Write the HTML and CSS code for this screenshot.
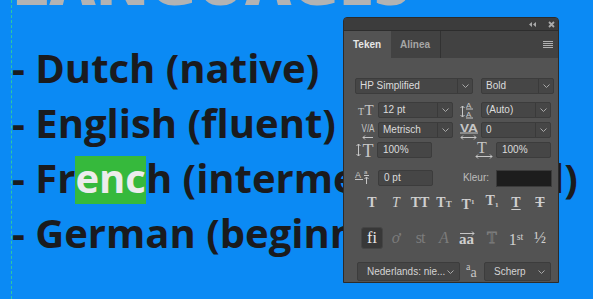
FILE: index.html
```html
<!DOCTYPE html>
<html>
<head>
<meta charset="utf-8">
<link rel="stylesheet" href="styles.css">
</head>
<body>
<div class="canvas">
  <div class="title">LANGUAGES</div>
  <ul class="langs">
    <li>- Dutch (native)</li>
    <li>- English (fluent)</li>
    <li>- Fr<span class="sel">enc</span>h (intermediate level)</li>
    <li>- German (beginner)</li>
  </ul>

  <div class="panel">
    <div class="titlebar">
      <svg class="collapse" width="7" height="5" viewBox="0 0 7 5"><path d="M3 0L0 2.5 3 5zM7 0L4 2.5 7 5z"/></svg>
      <svg class="close" width="7" height="7" viewBox="0 0 7 7"><path d="M1 1l5 5M6 1l-5 5"/></svg>
    </div>
    <div class="tabs">
      <div class="tab active">Teken</div>
      <div class="tab">Alinea</div>
      <svg class="menu" width="10" height="7" viewBox="0 0 10 7"><path d="M0 .5h10M0 2.5h10M0 4.5h10M0 6.5h10"/></svg>
    </div>
    <div class="body">
      <div class="row r1">
        <div class="dd w118"><span class="val">HP Simplified</span><span class="arr"><svg width="7" height="4" viewBox="0 0 7 4"><path d="M.5 .5L3.5 3.5 6.5 .5"/></svg></span></div>
        <div class="dd w73"><span class="val">Bold</span><span class="arr"><svg width="7" height="4" viewBox="0 0 7 4"><path d="M.5 .5L3.5 3.5 6.5 .5"/></svg></span></div>
      </div>

      <div class="row r2">
        <span class="ico c23"><svg width="23" height="16"><text x="3" y="12.5" class="serif" font-size="10">T</text><text x="9.5" y="12.5" class="serif" font-size="15">T</text></svg></span>
        <div class="dd w75"><span class="val">12 pt</span><span class="arr"><svg width="7" height="4" viewBox="0 0 7 4"><path d="M.5 .5L3.5 3.5 6.5 .5"/></svg></span></div>
        <span class="ico c28"><svg width="28" height="16"><path class="ln" d="M9.5 4v11M7.5 6l2-2 2 2M7.5 13l2 2 2-2"/><text x="13" y="5.5" class="sans" font-size="8">A</text><rect x="13" y="6.5" width="7" height="1"/><text x="13" y="14.5" class="sans" font-size="8">A</text><rect x="13" y="15.5" width="7" height="1"/></svg></span>
        <div class="dd w70"><span class="val">(Auto)</span><span class="arr"><svg width="7" height="4" viewBox="0 0 7 4"><path d="M.5 .5L3.5 3.5 6.5 .5"/></svg></span></div>
      </div>

      <div class="row r3">
        <span class="ico c23"><svg width="23" height="16"><text x="6.5" y="10" class="sans" font-size="11" textLength="13" lengthAdjust="spacingAndGlyphs">V/A</text><path class="ln" d="M8 15.5h10M10 13.5l-2 2 2 2"/></svg></span>
        <div class="dd w75"><span class="val">Metrisch</span><span class="arr"><svg width="7" height="4" viewBox="0 0 7 4"><path d="M.5 .5L3.5 3.5 6.5 .5"/></svg></span></div>
        <span class="ico c28"><svg width="28" height="16"><text x="7" y="10" class="sans bold" font-size="11" textLength="18" lengthAdjust="spacingAndGlyphs">VA</text><rect x="7" y="10.5" width="18" height="1"/><path class="ln" d="M8 15.5h15M10 13.5l-2 2 2 2M21 13.5l2 2-2 2"/></svg></span>
        <div class="dd w70"><span class="val">0</span><span class="arr"><svg width="7" height="4" viewBox="0 0 7 4"><path d="M.5 .5L3.5 3.5 6.5 .5"/></svg></span></div>
      </div>

      <div class="row r4">
        <span class="ico c22"><svg width="22" height="16"><path class="ln" d="M3.5 2v12M1.5 4l2-2 2 2M1.5 12l2 2 2-2"/><text x="7.5" y="15" class="serif" font-size="18">T</text></svg></span>
        <div class="fld w55">100%</div>
        <span class="ico c64"><svg width="64" height="16"><text x="45" y="11" class="serif" font-size="16">T</text><path class="ln" d="M44 14.5h16M46 12.5l-2 2 2 2M58 12.5l2 2-2 2"/></svg></span>
        <div class="fld w55">100%</div>
      </div>

      <div class="row r5">
        <span class="ico c23"><svg width="23" height="16"><text x="0" y="8" class="sans" font-size="9">A</text><rect x="0" y="9" width="8" height="1"/><text x="9" y="4" class="sans" font-size="6">a</text><rect x="9" y="5" width="5" height="1"/><path class="ln" d="M11.5 7v7M9.5 9l2-2 2 2"/></svg></span>
        <div class="fld w55">0 pt</div>
        <span class="lbl c63">Kleur:</span>
        <div class="swatch"></div>
      </div>

      <div class="row r6 icons">
        <span class="g b">T</span>
        <span class="g it">T</span>
        <span class="g b">TT</span>
        <span class="g b">T<span class="sc">T</span></span>
        <span class="g b">T<span class="sup">1</span></span>
        <span class="g b">T<span class="sub">1</span></span>
        <span class="g b ul">T</span>
        <span class="g b st">T</span>
      </div>

      <div class="row r7 icons">
        <span class="g fi">fi</span>
        <span class="g dim swash">ơ</span>
        <span class="g dim lig">st</span>
        <span class="g dim scr">A</span>
        <span class="g aa"><svg width="20" height="20"><path class="ln" d="M2 5.5h14M14 3.5l2 2-2 2"/><text x="1" y="16" class="serif bold" font-size="15">aa</text></svg></span>
        <span class="g dim outl">T</span>
        <span class="g ord">1<span class="supst">st</span></span>
        <span class="g frac">½</span>
      </div>

      <div class="row r8">
        <div class="dd2 w103"><span class="val">Nederlands: nie...</span><svg width="7" height="4" viewBox="0 0 7 4"><path d="M.5 .5L3.5 3.5 6.5 .5"/></svg></div>
        <span class="ico c24 aaico"><span class="asup">a</span>a</span>
        <div class="dd2 w67"><span class="val">Scherp</span><svg width="7" height="4" viewBox="0 0 7 4"><path d="M.5 .5L3.5 3.5 6.5 .5"/></svg></div>
      </div>
    </div>
  </div>
</div>
</body>
</html>
```

FILE: styles.css
```css
* { box-sizing: border-box; margin: 0; padding: 0; }

html, body {
  width: 593px;
  height: 299px;
  overflow: hidden;
}

body {
  background: #0b8af4;
  font-family: "Open Sans", "Liberation Sans", sans-serif;
}

.canvas {
  position: relative;
  display: flow-root;
  height: 299px;
  padding-left: 12px;
}

.canvas::before {
  content: "";
  position: absolute;
  left: 11px;
  top: 0;
  bottom: 0;
  border-left: 1px dashed #2bc7a4;
}

.title {
  margin-top: -51px;
  height: 64px;
  line-height: 64px;
  font-size: 64px;
  font-weight: 800;
  color: #b3b3b3;
  white-space: nowrap;
}

.langs {
  list-style: none;
  margin-top: 27px;
  font-size: 40px;
  font-weight: 700;
  line-height: 55px;
  color: #1a1b1e;
  white-space: nowrap;
}

.sel {
  color: #ececec;
  background: linear-gradient(#36b93c, #36b93c) 0 6px / 100% 48px no-repeat;
}

/* ---------- panel ---------- */
.panel {
  position: absolute;
  left: 343px;
  top: 17px;
  width: 216px;
  height: 266px;
  background: #535353;
  border: 1px solid #2b2b2b;
  border-radius: 4px 4px 0 0;
  font-family: "Liberation Sans", Arial, sans-serif;
  font-size: 10px;
  color: #dcdcdc;
  display: flex;
  flex-direction: column;
}

.titlebar {
  height: 13px;
  flex: none;
  background: #3c3c3c;
  border-bottom: 1px solid #2d2d2d;
  border-radius: 3px 3px 0 0;
  display: flex;
  justify-content: flex-end;
  align-items: center;
  padding-right: 3px;
  gap: 12px;
}
.collapse path { fill: #a9a9a9; stroke: none; }
.close path { stroke: #a9a9a9; stroke-width: 1.8; fill: none; }

.tabs {
  height: 27px;
  flex: none;
  display: flex;
  align-items: stretch;
  background: #424242;
}
.tab {
  width: 50px;
  padding-left: 9px;
  line-height: 27px;
  font-weight: 700;
  color: #a6a6a6;
  border-right: 1px solid #323232;
}
.tab.active {
  width: 47px;
  background: #535353;
  color: #e6e6e6;
  border-right: none;
}
.menu {
  margin: auto 5px auto auto;
}
.menu path { stroke: #b0b0b0; stroke-width: 1; }

.body {
  padding: 20px 0 0 11px;
}

.row {
  display: flex;
  align-items: center;
  height: 16px;
}
.r1 { gap: 8px; }
.r2 { margin-top: 8px; }
.r3 { margin-top: 4px; }
.r4 { margin-top: 4px; }
.r5 { margin-top: 12px; }
.r6 { margin-top: 7px; height: 20px; margin-left: 5px; }
.r7 { margin-top: 14px; height: 22px; margin-left: 5px; }
.r8 { margin-top: 13px; height: 19px; margin-left: 2px; }

.dd {
  display: flex;
  height: 16px;
  background: #464646;
  border: 1px solid #3c3c3c;
  border-radius: 2px;
}
.dd .val {
  flex: 1;
  padding-left: 4px;
  line-height: 14px;
  white-space: nowrap;
  overflow: hidden;
}
.dd .arr {
  width: 15px;
  border-left: 1px solid #3a3a3a;
  display: flex;
  align-items: center;
  justify-content: center;
}
svg path { stroke: #a8a8a8; fill: none; }

.w118 { width: 118px; }
.w73 { width: 73px; }
.w75 { width: 75px; }
.w70 { width: 70px; }
.w55 { width: 55px; }
.w103 { width: 103px; }
.w67 { width: 67px; }

.fld {
  height: 16px;
  background: #464646;
  border: 1px solid #3c3c3c;
  border-radius: 2px;
  padding-left: 5px;
  line-height: 14px;
}

.ico { display: flex; height: 16px; flex: none; }
.ico svg { overflow: visible; }
.ico svg text, .ico svg rect { fill: #c6c6c6; }
.ico svg .ln, .g svg .ln { stroke: #c6c6c6; stroke-width: 1; fill: none; }
.c22 { width: 22px; }
.c23 { width: 23px; }
.c24 { width: 24px; }
.c28 { width: 28px; }
.c64 { width: 64px; }
.c63 { width: 63px; }

.serif { font-family: "Liberation Serif", serif; }
.sans { font-family: "Liberation Sans", sans-serif; }
.bold { font-weight: 700; }

.lbl {
  text-align: right;
  padding-right: 7px;
  color: #bdbdbd;
  line-height: 16px;
}
.swatch {
  width: 56px;
  height: 17px;
  background: #1d1d1d;
  border: 1px solid #3b3b3b;
}

/* glyph icon rows */
.icons .g {
  width: 24px;
  flex: none;
  text-align: center;
  font-family: "Liberation Serif", serif;
  color: #cfcfcf;
  white-space: nowrap;
}
.r6 .g { font-size: 14px; line-height: 20px; }
.g.b { font-weight: 700; }
.g.it { font-style: italic; font-weight: 400; }
.g .sc { font-size: 9px; }
.g .sup { font-size: 7px; vertical-align: 5px; }
.g .sub { font-size: 7px; vertical-align: -2px; }
.g.ul { text-decoration: underline; text-underline-offset: 2px; }
.g.st { text-decoration: line-through; }

.r7 .g { font-size: 16px; line-height: 22px; }
.g.fi {
  width: 22px;
  margin: 0 1px;
  height: 22px;
  background: #383838;
  border: 1px solid #454545;
  border-radius: 3px;
  color: #ececec;
  line-height: 20px;
}
.g.dim { color: #7c7c7c; }
.g.swash { font-style: italic; }
.g.lig { letter-spacing: -1px; }
.g.scr { font-style: italic; font-weight: 400; }
.g.aa { display: flex; justify-content: center; align-items: center; }
.g.aa svg text { fill: #cfcfcf; }
.g.outl {
  color: transparent;
  -webkit-text-stroke: 0.8px #7c7c7c;
}
.g.ord { font-weight: 400; }
.g .supst { font-size: 10px; vertical-align: 5px; }
.g.frac { font-size: 16px; }

.dd2 {
  display: flex;
  align-items: center;
  height: 19px;
  background: #464646;
  border: 1px solid #3c3c3c;
  border-radius: 2px;
  padding: 0 5px 0 9px;
}
.dd2 .val { flex: 1; white-space: nowrap; color: #d4d4d4; }

.aaico {
  height: 19px;
  padding-left: 6px;
  font-family: "Liberation Serif", serif;
  font-size: 14px;
  color: #c6c6c6;
  align-items: flex-end;
  line-height: 16px;
}
.asup { font-size: 10px; align-self: flex-start; line-height: 10px; }
```
